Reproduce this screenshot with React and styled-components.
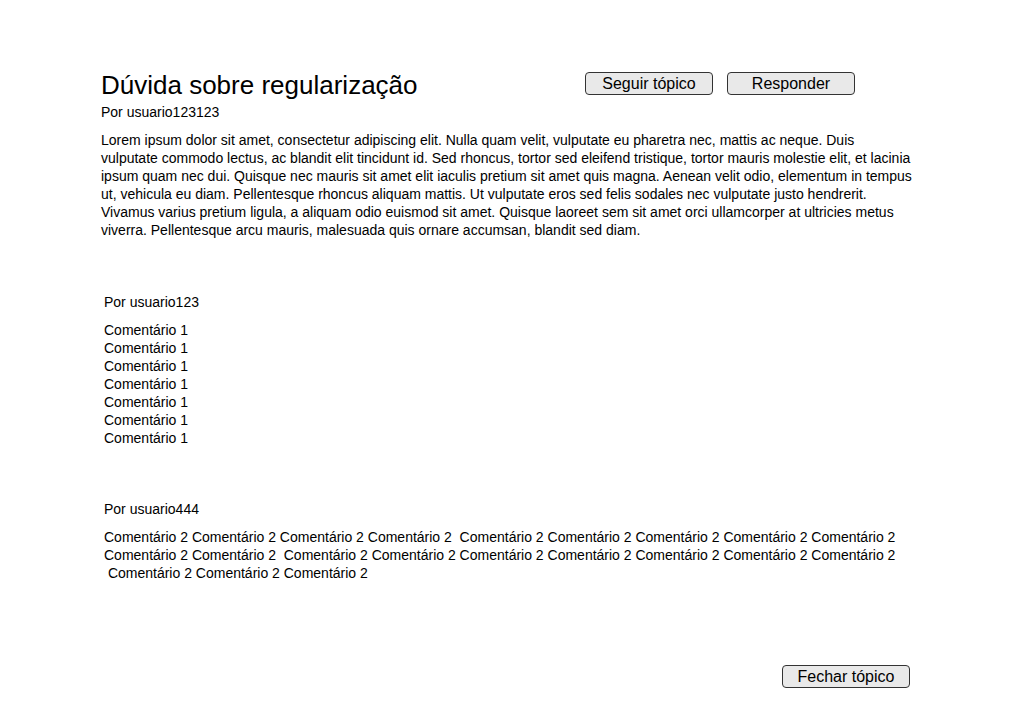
import styled, { createGlobalStyle } from "styled-components";

const GlobalStyle = createGlobalStyle`
  body {
    margin: 0;
    background: #fff;
    color: #000;
    font-family: "Liberation Sans", Arial, sans-serif;
  }
`;

const NB = "\u00a0";

const comments = [
  {
    author: "usuario123",
    lines: Array(7).fill("Comentário 1"),
  },
  {
    author: "usuario444",
    text:
      `Comentário 2 Comentário 2 Comentário 2 Comentário 2 ${NB}Comentário 2 Comentário 2 Comentário 2 Comentário 2 Comentário 2 Comentário 2 Comentário 2 ${NB}Comentário 2 Comentário 2 Comentário 2 Comentário 2 Comentário 2 Comentário 2 Comentário 2 ${NB}Comentário 2 Comentário 2 Comentário 2`,
  },
];

const Topic = () => {
  return (
    <>
      <GlobalStyle />
      <Page>
        <Header>
          <TitleBlock>
            <Title>Dúvida sobre regularização</Title>
            <Author>Por usuario123123</Author>
          </TitleBlock>
          <Actions>
            <Button>Seguir tópico</Button>
            <Button>Responder</Button>
          </Actions>
        </Header>

        <Body>
          Lorem ipsum dolor sit amet, consectetur adipiscing elit. Nulla quam velit, vulputate eu
          pharetra nec, mattis ac neque. Duis vulputate commodo lectus, ac blandit elit tincidunt
          id. Sed rhoncus, tortor sed eleifend tristique, tortor mauris molestie elit, et lacinia
          ipsum quam nec dui. Quisque nec mauris sit amet elit iaculis pretium sit amet quis magna.
          Aenean velit odio, elementum in tempus ut, vehicula eu diam. Pellentesque rhoncus aliquam
          mattis. Ut vulputate eros sed felis sodales nec vulputate justo hendrerit. Vivamus varius
          pretium ligula, a aliquam odio euismod sit amet. Quisque laoreet sem sit amet orci
          ullamcorper at ultricies metus viverra. Pellentesque arcu mauris, malesuada quis ornare
          accumsan, blandit sed diam.
        </Body>

        <CommentList>
          {comments.map((c) => (
            <Comment key={c.author}>
              <CommentAuthor>Por {c.author}</CommentAuthor>
              <CommentText>
                {c.lines ? c.lines.map((l, i) => <div key={i}>{l}</div>) : c.text}
              </CommentText>
            </Comment>
          ))}
        </CommentList>

        <Footer>
          <Button>Fechar tópico</Button>
        </Footer>
      </Page>
    </>
  );
};

const Page = styled.main`
  width: 812px;
  padding: 70px 0 0 101px;
`;

const Header = styled.header`
  display: flex;
  align-items: flex-start;
`;

const TitleBlock = styled.div`
  width: 484px;
  display: flex;
  flex-direction: column;
`;

const Title = styled.h1`
  margin: 0;
  font-size: 26px;
  font-weight: normal;
  line-height: 30px;
`;

const Author = styled.p`
  margin: 3px 0 0;
  font-size: 14px;
  line-height: 18px;
`;

const Actions = styled.div`
  display: flex;
  gap: 14px;
  padding-top: 2px;
`;

const Button = styled.button`
  width: 128px;
  height: 23px;
  padding: 0;
  border: 1px solid #333;
  border-radius: 4px;
  background: #e9e9e9;
  color: #000;
  font-family: "Liberation Sans", Arial, sans-serif;
  font-size: 16px;
  line-height: 21px;
`;

const Body = styled.p`
  margin: 10px 0 0;
  font-size: 14px;
  line-height: 18px;
`;

const CommentList = styled.section`
  margin-top: 51px;
  display: flex;
  flex-direction: column;
  gap: 47px;
`;

const Comment = styled.article`
  padding: 3px;
  display: flex;
  flex-direction: column;
  gap: 10px;
`;

const CommentAuthor = styled.div`
  font-size: 14px;
  line-height: 18px;
`;

const CommentText = styled.div`
  width: 800px;
  font-size: 14px;
  line-height: 18px;
`;

const Footer = styled.footer`
  margin-top: 80px;
  padding-right: 3px;
  display: flex;
  justify-content: flex-end;
`;

export default Topic;
